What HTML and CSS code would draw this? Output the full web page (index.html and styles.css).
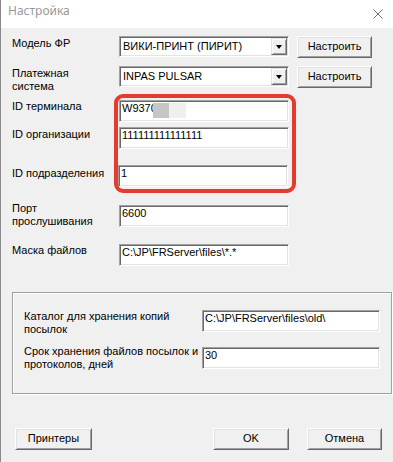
FILE: index.html
```html
<!DOCTYPE html>
<html lang="ru">
<head>
    <meta charset="UTF-8">
    <meta name="viewport" content="width=device-width, initial-scale=1.0">
    <title>Настройка</title>
    <link rel="stylesheet" href="styles.css">
</head>
<body>
    <div class="window">
        <div class="titlebar">
            <span class="title">Настройка</span>
            <svg class="close" width="10" height="10" viewBox="0 0 10 10">
                <path d="M0.5 0.5 L9.5 9.5 M9.5 0.5 L0.5 9.5" stroke="#707070" stroke-width="1" fill="none"/>
            </svg>
        </div>

        <div class="content">
            <div class="row row-model">
                <div class="label">Модель ФР</div>
                <div class="combo">
                    <span class="combo-text">ВИКИ-ПРИНТ (ПИРИТ)</span>
                    <span class="combo-btn"><span class="arrow"></span></span>
                </div>
                <div class="btn btn-setup">Настроить</div>
            </div>

            <div class="row row-pay">
                <div class="label">Платежная<br>система</div>
                <div class="combo">
                    <span class="combo-text">INPAS PULSAR</span>
                    <span class="combo-btn"><span class="arrow"></span></span>
                </div>
                <div class="btn btn-setup">Настроить</div>
            </div>

            <div class="row row-term">
                <div class="label">ID терминала</div>
                <div class="field field-term">W9370
                    <span class="mask mask-dark"></span>
                    <span class="mask mask-light"></span>
                </div>
            </div>

            <div class="row row-org">
                <div class="label">ID организации</div>
                <div class="field">111111111111111</div>
            </div>

            <div class="row row-sub">
                <div class="label">ID подразделения</div>
                <div class="field field-sub">1</div>
            </div>

            <div class="row row-port">
                <div class="label">Порт<br>прослушивания</div>
                <div class="field">6600</div>
            </div>

            <div class="row row-mask">
                <div class="label">Маска файлов</div>
                <div class="field">C:\JP\FRServer\files\*.*</div>
            </div>

            <div class="group">
                <div class="grow grow-dir">
                    <div class="label glabel">Каталог для хранения копий<br>посылок</div>
                    <div class="field gfield">C:\JP\FRServer\files\old\</div>
                </div>
                <div class="grow grow-keep">
                    <div class="label glabel">Срок хранения файлов посылок и<br>протоколов, дней</div>
                    <div class="field gfield">30</div>
                </div>
            </div>

            <div class="footer">
                <div class="btn btn-printers">Принтеры</div>
                <div class="btn btn-ok">OK</div>
                <div class="btn btn-cancel">Отмена</div>
            </div>
        </div>

        <!-- red highlight drawn over the ID fields -->
        <div class="highlight"></div>
    </div>
</body>
</html>
```

FILE: styles.css
```css
body {
    margin: 0;
    background-color: #ffffff;
    font-family: "Liberation Sans", Arial, sans-serif;
    font-size: 11px;
    color: #000000;
}

.window {
    position: relative;
    width: 393px;
    height: 462px;
    box-sizing: border-box;
    border-left: 1px solid #8a8a8a;
    background-color: #f0f0f0;
    overflow: hidden;
}

/* title bar */
.titlebar {
    height: 28px;
    box-sizing: border-box;
    padding: 3px 10px 0 7px;
    background-color: #ffffff;
    display: flex;
    justify-content: space-between;
    align-items: flex-start;
}

.title {
    font-family: "Noto Sans", sans-serif;
    font-size: 12px;
    line-height: 16px;
    color: #999999;
}

.close {
    margin-top: 6px;
}

/* form */
.content {
    padding-left: 11px;
}

.row {
    display: flex;
    align-items: flex-start;
    height: 22px;
}

.label {
    width: 107px;
    flex: none;
    line-height: 13px;
    white-space: nowrap;
}

.row-model { margin-top: 8px; }
.row-pay { margin-top: 8px; }
.row-term { margin-top: 12px; }
.row-org { margin-top: 5px; }
.row-sub { margin-top: 16px; }
.row-port { margin-top: 18px; }
.row-mask { margin-top: 17px; }

.row-model .label { margin-top: 1px; }
.row-pay .label { margin-top: 1px; }
.row-term .label { margin-top: 0; }
.row-org .label { margin-top: 1px; }
.row-sub .label { margin-top: 2px; }
.row-port .label { margin-top: -3px; }
.row-mask .label { margin-top: 0; }

/* sunken edit box */
.field {
    position: relative;
    width: 170px;
    height: 22px;
    box-sizing: border-box;
    padding: 0 0 0 1px;
    line-height: 13px;
    background-color: #ffffff;
    border: 1px solid;
    border-color: #a0a0a0 #ffffff #ffffff #a0a0a0;
    box-shadow: inset 1px 1px 0 #696969, inset -1px -1px 0 #e3e3e3;
    padding-top: 1px;
    padding-left: 2px;
    white-space: nowrap;
    overflow: hidden;
}

.field-sub {
    margin-left: -1px;
}

.mask {
    position: absolute;
    top: 2px;
    height: 15px;
}

.mask-dark {
    left: 33px;
    width: 16px;
    background-color: #c6c6c6;
}

.mask-light {
    left: 49px;
    width: 17px;
    background-color: #efefef;
}

/* combo box */
.combo {
    width: 170px;
    height: 21px;
    box-sizing: border-box;
    display: flex;
    background-color: #ffffff;
    border: 1px solid;
    border-color: #a0a0a0 #ffffff #ffffff #a0a0a0;
    box-shadow: inset 1px 1px 0 #696969, inset -1px -1px 0 #e3e3e3;
    padding: 1px;
}

.combo-text {
    flex: 1;
    padding: 2px 0 0 2px;
    line-height: 13px;
    white-space: nowrap;
}

.combo-btn {
    width: 16px;
    box-sizing: border-box;
    display: flex;
    align-items: center;
    justify-content: center;
    background-color: #f0f0f0;
    border: 1px solid;
    border-color: #e3e3e3 #696969 #696969 #e3e3e3;
    box-shadow: inset 1px 1px 0 #ffffff, inset -1px -1px 0 #a0a0a0;
}

.arrow {
    width: 0;
    height: 0;
    border-left: 3.5px solid transparent;
    border-right: 3.5px solid transparent;
    border-top: 4px solid #000000;
}

/* push buttons */
.btn {
    height: 22px;
    box-sizing: border-box;
    line-height: 18px;
    text-align: center;
    background-color: #f0f0f0;
    border: 1px solid;
    border-color: #ffffff #696969 #696969 #ffffff;
    box-shadow: inset 1px 1px 0 #e3e3e3, inset -1px -1px 0 #a0a0a0;
}

.btn-setup {
    width: 75px;
    margin-left: 8px;
}

/* group box */
.group {
    margin-top: 26px;
    width: 380px;
    height: 102px;
    box-sizing: border-box;
    padding: 17px 0 0 11px;
    border: 1px solid #a0a0a0;
    box-shadow: inset 1px 1px 0 #ffffff, 1px 1px 0 #ffffff;
}

.grow {
    display: flex;
    align-items: flex-start;
    height: 22px;
}

.grow-keep {
    margin-top: 15px;
}

.glabel {
    width: 178px;
}

.grow-keep .glabel {
    margin-top: -2px;
}

.gfield {
    width: 178px;
}

/* bottom buttons */
.footer {
    margin-top: 34px;
    width: 370px;
    box-sizing: border-box;
    padding-left: 3px;
    display: flex;
}

.btn-printers {
    width: 77px;
}

.btn-ok {
    width: 76px;
    margin-left: auto;
}

.btn-cancel {
    width: 75px;
    margin-left: 18px;
}

.highlight {
    position: absolute;
    left: 113px;
    top: 94px;
    width: 182px;
    height: 99px;
    box-sizing: border-box;
    border: 4px solid #e53b2f;
    border-radius: 9px;
}
```
